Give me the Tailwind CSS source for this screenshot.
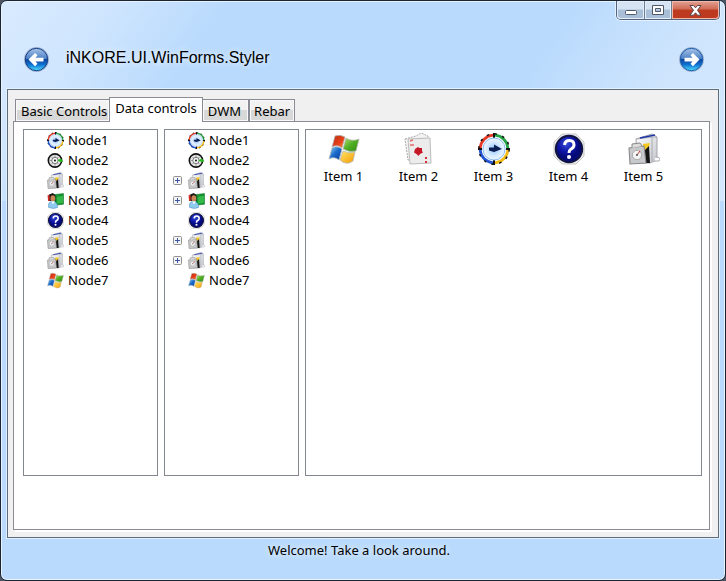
<!DOCTYPE html>
<html lang="en">
<head>
<meta charset="utf-8">
<title>iNKORE.UI.WinForms.Styler</title>
<script src="https://cdn.jsdelivr.net/npm/@tailwindcss/browser@4"></script>
</head>
<body class="bg-[#4b5563] font-['Noto_Sans','Open_Sans',sans-serif] text-[13px] leading-5 text-black">
<svg class="absolute size-0" aria-hidden="true">
  <defs>
    <linearGradient id="orb" x1="0" y1="0" x2="0" y2="1">
      <stop offset="0" stop-color="#a9c3e6"/><stop offset=".47" stop-color="#4a7fc6"/><stop offset=".5" stop-color="#0c439f"/><stop offset=".72" stop-color="#0d6fd0"/><stop offset="1" stop-color="#4fe0ff"/>
    </linearGradient>
    <linearGradient id="red" x1="0" y1="0" x2="1" y2="1"><stop offset="0" stop-color="#b92a0c"/><stop offset=".6" stop-color="#e8431b"/><stop offset="1" stop-color="#ff9a4a"/></linearGradient>
    <linearGradient id="green" x1="0" y1="0" x2="1" y2="1"><stop offset="0" stop-color="#b5e07a"/><stop offset=".5" stop-color="#4fae22"/><stop offset="1" stop-color="#2f8a12"/></linearGradient>
    <linearGradient id="blue" x1="0" y1="0" x2="1" y2="1"><stop offset="0" stop-color="#8fd6f5"/><stop offset=".5" stop-color="#1767c9"/><stop offset="1" stop-color="#0c3d9a"/></linearGradient>
    <linearGradient id="gold" x1="0" y1="0" x2="1" y2="1"><stop offset="0" stop-color="#ffe66a"/><stop offset="1" stop-color="#f59a00"/></linearGradient>
    <radialGradient id="dial"><stop offset="0" stop-color="#8fc4ff"/><stop offset=".5" stop-color="#d5eaff"/><stop offset="1" stop-color="#ffffff"/></radialGradient>
    <radialGradient id="ball" cx=".4" cy=".3"><stop offset="0" stop-color="#3b50d8"/><stop offset=".6" stop-color="#0f16a8"/><stop offset="1" stop-color="#050a78"/></radialGradient>
    <linearGradient id="box" x1="0" y1="0" x2="1" y2="1"><stop offset="0" stop-color="#fff"/><stop offset="1" stop-color="#c4c6cc"/></linearGradient>
  </defs>
  <symbol id="flag" viewBox="0 0 32 32">
    <path d="M7 3Q12 1 17 4L14 15Q9 11 4 14Z" fill="url(#red)" stroke="#b8b8b8" stroke-width=".8"/>
    <path d="M18 5Q24 9 31 6L28 18Q22 20 15 16Z" fill="url(#green)" stroke="#b8b8b8" stroke-width=".8"/>
    <path d="M4 15Q9 12 14 16L11 27Q6 23 1 26Z" fill="url(#blue)" stroke="#b8b8b8" stroke-width=".8"/>
    <path d="M15 18Q21 21 27 19L25 28Q18 33 12 27Z" fill="url(#gold)" stroke="#b8b8b8" stroke-width=".8"/>
  </symbol>
  <symbol id="clock" viewBox="0 0 32 32">
    <circle cx="16" cy="16" r="13.5" fill="url(#dial)"/>
    <g fill="none" stroke-width="2.8">
      <path d="M2.2 15A13.8 13.8 0 0 1 15 2.2" stroke="#e53925"/>
      <path d="M17 2.2A13.8 13.8 0 0 1 29.8 15" stroke="#27a344"/>
      <path d="M29.8 17A13.8 13.8 0 0 1 17 29.8" stroke="#f4bb15"/>
      <path d="M15 29.8A13.8 13.8 0 0 1 2.2 17" stroke="#2455d4"/>
    </g>
    <circle cx="16" cy="16" r="15.2" fill="none" stroke="#111" stroke-width="1.4" stroke-dasharray="2.6 5.36"/>
    <path d="M16 0V5M16 27V32M0 16H4M28 16H32" stroke="#111" stroke-width="2"/>
    <circle cx="16" cy="16" r="11" fill="none" stroke="#8dbcf0" stroke-width="1"/>
    <path d="M11 14.5L16 14.5L16 11.5L24 16L16 19L11 17.5Z" fill="#0a1f52"/>
  </symbol>
  <symbol id="gauge" viewBox="0 0 32 32">
    <circle cx="15" cy="16" r="12.5" fill="#e6e6e6" stroke="#111" stroke-width="3"/>
    <path d="M15 6V26M5 16H25M8 9L22 23M22 9L8 23" stroke="#777" stroke-width="1.3"/>
    <circle cx="15" cy="16" r="6" fill="#f2f2f2" stroke="#555" stroke-width="1.4"/>
    <circle cx="15" cy="16" r="2" fill="#222"/>
    <path d="M19 16L26 12L31 18L26 19Z" fill="#25bb1d"/>
  </symbol>
  <symbol id="package" viewBox="0 0 32 32">
    <path d="M8 6L24 1L29 4V27L22 30H9Z" fill="url(#box)" stroke="#a5a7b0"/>
    <path d="M8 6L24 4V28M24 4L29 4" fill="none" stroke="#a9abb4"/>
    <path d="M12 5L27 2" stroke="#1c35a8" stroke-width="1.5"/>
    <path d="M15 11L22 10L20 17L15 16Z" fill="#f6c91c"/>
    <path d="M17 17L21 13L22 30H16Z" fill="#151515"/>
    <path d="M1 15L16 13L18 30L2 31Z" fill="#c9cacd" stroke="#888" stroke-width="1.1"/>
    <path d="M4 15V11L12 10L14 13" fill="#ddd" stroke="#888"/>
    <circle cx="9" cy="22" r="4.7" fill="#f3f3f3" stroke="#aaa"/><path d="M9 22L12 18" stroke="#c33"/>
    <circle cx="9" cy="22" r="1" fill="#555"/>
    <path d="M27 24Q34 24 31 28H27" fill="#fff" stroke="#aaa"/>
  </symbol>
  <symbol id="user" viewBox="0 0 32 32">
    <path d="M13 5L31 3V23L15 25Z" fill="#159431" stroke="#087020"/>
    <path d="M19 9L30 7V20L19 22Z" fill="#33b84a"/>
    <path d="M3 5L11 2L16 6V17H3Z" fill="#171717"/><path d="M1 6H5V17H2Z" fill="#d32b20"/>
    <ellipse cx="11" cy="12" rx="4.5" ry="6" fill="#c98657"/>
    <path d="M3 29Q1 18 10 18Q20 18 20 29Q12 33 3 29Z" fill="#8fcbee" stroke="#4b91c2"/>
    <path d="M8 18L11 23L15 18Z" fill="#fff"/>
  </symbol>
  <symbol id="help" viewBox="0 0 32 32">
    <path d="M9 1H23L31 9V23L23 31H9L1 23V9Z" fill="#eee" stroke="#c6c6c6"/>
    <circle cx="16" cy="16" r="13.2" fill="url(#ball)" stroke="#11153f" stroke-width="2"/>
    <path d="M11.5 12Q12 7.5 16.5 7.5T21 12Q21 14.5 17.5 16.5Q16 17.5 16 20" fill="none" stroke="#fff" stroke-width="3"/>
    <circle cx="16" cy="24" r="2" fill="#fff"/>
  </symbol>
  <symbol id="cards" viewBox="0 0 32 32">
    <path d="M2 6L13 3L18 0L25 3L24 29L5 27Z" fill="#f3f3f3" stroke="#aaa" stroke-dasharray="2 1"/>
    <path d="M5 6L27 5L28 30L7 31Z" fill="#ececed" stroke="#bbb"/>
    <path d="M7 8L10 7M7 12L11 12" stroke="#e46b6b" stroke-width="1.5"/>
    <path d="M15 14L16.500 15L19 15V18L20 19.500L17 21L15.500 23L13.500 21L11 19.500L12 16Z" fill="#c51826"/>
    <path d="M22 25H24M22 29H24" stroke="#d8303a" stroke-width="2"/>
  </symbol>
</svg>

<div class="flex min-h-screen flex-col overflow-hidden rounded-[7px] border border-[#1b2532] bg-[#b9dafd] bg-[linear-gradient(125deg,#d8eafe_0%,#d0e6fe_12%,#b9dafd_27%,#b9dafd_66%,#cfe5fd_84%,#d3e8fe_100%)] bg-[length:100%_200px] bg-no-repeat px-[5px] shadow-[inset_0_0_0_1px_#e7f4ff]">
  <header class="flex h-[87px] flex-col">
    <div class="flex h-[19px] shrink-0 justify-end">
      <div class="flex rounded-b-[5px] border border-t-0 border-[#52647b] shadow-[0_0_0_1px_#e2f0ff]">
        <button aria-label="Minimize" class="flex w-7 items-center justify-center rounded-bl-[4px] border-r border-[#6d7d92] bg-linear-to-b from-[#d6e3f3] from-45% to-[#a9bed7] to-50% shadow-[inset_0_0_0_1px_#e4eefa]">
          <svg class="mt-1 h-[5px] w-3" viewBox="0 0 12 5"><rect x=".5" y=".5" width="11" height="4" rx="1" fill="#fff" stroke="#50596a"/></svg>
        </button>
        <button aria-label="Maximize" class="flex w-[27px] items-center justify-center border-r border-[#6d7d92] bg-linear-to-b from-[#d6e3f3] from-45% to-[#a9bed7] to-50% shadow-[inset_0_0_0_1px_#e4eefa]">
          <svg class="h-[10px] w-3" viewBox="0 0 12 10"><path d="M.5.5H11.5V9.5H.5ZM3.5 3.5V6.5H8.5V3.5Z" fill="#fff" fill-rule="evenodd" stroke="#50596a"/></svg>
        </button>
        <button aria-label="Close" class="flex w-[47px] items-center justify-center rounded-br-[4px] bg-linear-to-b from-[#e2a293] from-0% via-[#cf6a55] via-45% to-[#bd3a21] to-50% shadow-[inset_0_0_0_1px_#f0b7aa]">
          <svg class="h-[11px] w-[13px]" viewBox="0 0 13 11"><path d="M1 .5H4.5L6.5 2.8L8.5.5H12L8.5 5.3L12 10.2H8.5L6.5 7.8L4.5 10.2H1L4.5 5.3Z" fill="#fff" stroke="#5c4147"/></svg>
        </button>
      </div>
    </div>
    <div class="flex grow items-center gap-4 pt-[10px] pr-[15px] pl-[17px]">
      <button aria-label="Back" class="size-[27px]">
        <svg viewBox="0 0 27 27"><circle cx="13.5" cy="13.5" r="12.5" fill="#9eb4d2"/><circle cx="13.5" cy="13.5" r="11.2" fill="url(#orb)" stroke="#153f87"/><path d="M5.5 13.5L12 7L14.5 9.3L12.5 11.8H20.5V15.4H12.5L14.5 17.8L12 20.2Z" fill="#fff"/></svg>
      </button>
      <h1 class="grow pb-[2px] font-['Liberation_Sans',Arial,sans-serif] text-base leading-5 text-shadow-[0_0_6px_white]">iNKORE.UI.WinForms.Styler</h1>
      <button aria-label="Forward" class="size-[27px]">
        <svg viewBox="0 0 27 27"><circle cx="13.5" cy="13.5" r="12.5" fill="#9eb4d2"/><circle cx="13.5" cy="13.5" r="11.2" fill="url(#orb)" stroke="#1b5fae"/><path d="M21.5 13.5L15 7L12.5 9.3L14.5 11.8H6.5V15.4H14.5L12.5 17.8L15 20.2Z" fill="#fff"/></svg>
      </button>
    </div>
  </header>

  <main class="flex grow flex-col border border-[#e1f0ff]">
    <div class="flex grow flex-col border border-[#5e6c7e] bg-[#f0f0f0] px-[5px] pt-[7px] pb-[7px]">
      <div role="tablist" class="z-10 -mb-px flex items-end pl-[2px]">
        <button role="tab" id="tab-basic" class="h-[23px] border border-r-0 border-[#898c95] bg-linear-to-b from-[#f2f2f2] from-45% to-[#d8d8d8] to-50% pr-[2px] pl-[5px] shadow-[inset_0_0_0_1px_#f9f9f9]">Basic Controls</button>
        <button role="tab" id="tab-data" aria-selected="true" aria-controls="data-panel" class="h-[25px] border border-b-0 border-[#898c95] bg-white px-[5px] pb-1">Data controls</button>
        <button role="tab" id="tab-dwm" class="h-[23px] border border-l-0 border-[#898c95] bg-linear-to-b from-[#f2f2f2] from-45% to-[#d8d8d8] to-50% pr-[7px] pl-[5px] shadow-[inset_0_0_0_1px_#f9f9f9]">DWM</button>
        <button role="tab" id="tab-rebar" class="h-[23px] border border-[#898c95] bg-linear-to-b from-[#f2f2f2] from-45% to-[#d8d8d8] to-50% px-1 shadow-[inset_0_0_0_1px_#f9f9f9]">Rebar</button>
      </div>
      <div id="data-panel" role="tabpanel" aria-labelledby="tab-data" class="mr-[3px] flex grow gap-[6px] border border-[#898c95] bg-white pt-[7px] pr-[7px] pb-[53px] pl-[9px] shadow-[2px_2px_0_0_white]">
        <ul aria-label="Nodes" class="w-[135px] shrink-0 border border-[#828790] pl-[23px]">
          <li class="flex h-5 items-center gap-1"><svg class="size-[17px]"><use href="#clock"/></svg>Node1</li>
          <li class="flex h-5 items-center gap-1"><svg class="size-[17px]"><use href="#gauge"/></svg>Node2</li>
          <li class="flex h-5 items-center gap-1"><svg class="size-[17px]"><use href="#package"/></svg>Node2</li>
          <li class="flex h-5 items-center gap-1"><svg class="size-[17px]"><use href="#user"/></svg>Node3</li>
          <li class="flex h-5 items-center gap-1"><svg class="size-[17px]"><use href="#help"/></svg>Node4</li>
          <li class="flex h-5 items-center gap-1"><svg class="size-[17px]"><use href="#package"/></svg>Node5</li>
          <li class="flex h-5 items-center gap-1"><svg class="size-[17px]"><use href="#package"/></svg>Node6</li>
          <li class="flex h-5 items-center gap-1"><svg class="size-[17px]"><use href="#flag"/></svg>Node7</li>
        </ul>
        <ul aria-label="Expandable nodes" class="w-[135px] shrink-0 border border-[#828790] pl-2">
          <li class="flex h-5 items-center gap-1 pl-[15px]"><svg class="size-[17px]"><use href="#clock"/></svg>Node1</li>
          <li class="flex h-5 items-center gap-1 pl-[15px]"><svg class="size-[17px]"><use href="#gauge"/></svg>Node2</li>
          <li class="flex h-5 items-center gap-1"><button aria-label="Expand Node2" class="mr-[2px] size-[9px]"><svg viewBox="0 0 9 9"><rect x=".5" y=".5" width="8" height="8" rx="1" fill="#f4f4f4" stroke="#919191"/><path d="M2 4.5H7M4.5 2V7" stroke="#3a56a5"/></svg></button><svg class="size-[17px]"><use href="#package"/></svg>Node2</li>
          <li class="flex h-5 items-center gap-1"><button aria-label="Expand Node3" class="mr-[2px] size-[9px]"><svg viewBox="0 0 9 9"><rect x=".5" y=".5" width="8" height="8" rx="1" fill="#f4f4f4" stroke="#919191"/><path d="M2 4.5H7M4.5 2V7" stroke="#3a56a5"/></svg></button><svg class="size-[17px]"><use href="#user"/></svg>Node3</li>
          <li class="flex h-5 items-center gap-1 pl-[15px]"><svg class="size-[17px]"><use href="#help"/></svg>Node4</li>
          <li class="flex h-5 items-center gap-1"><button aria-label="Expand Node5" class="mr-[2px] size-[9px]"><svg viewBox="0 0 9 9"><rect x=".5" y=".5" width="8" height="8" rx="1" fill="#f4f4f4" stroke="#919191"/><path d="M2 4.5H7M4.5 2V7" stroke="#3a56a5"/></svg></button><svg class="size-[17px]"><use href="#package"/></svg>Node5</li>
          <li class="flex h-5 items-center gap-1"><button aria-label="Expand Node6" class="mr-[2px] size-[9px]"><svg viewBox="0 0 9 9"><rect x=".5" y=".5" width="8" height="8" rx="1" fill="#f4f4f4" stroke="#919191"/><path d="M2 4.5H7M4.5 2V7" stroke="#3a56a5"/></svg></button><svg class="size-[17px]"><use href="#package"/></svg>Node6</li>
          <li class="flex h-5 items-center gap-1 pl-[15px]"><svg class="size-[17px]"><use href="#flag"/></svg>Node7</li>
        </ul>
        <ul aria-label="Items" class="flex grow flex-wrap content-start border border-[#828790] pt-[3px]">
          <li class="flex w-[75px] flex-col items-center gap-px"><svg class="size-8"><use href="#flag"/></svg>Item 1</li>
          <li class="flex w-[75px] flex-col items-center gap-px"><svg class="size-8"><use href="#cards"/></svg>Item 2</li>
          <li class="flex w-[75px] flex-col items-center gap-px"><svg class="size-8"><use href="#clock"/></svg>Item 3</li>
          <li class="flex w-[75px] flex-col items-center gap-px"><svg class="size-8"><use href="#help"/></svg>Item 4</li>
          <li class="flex w-[75px] flex-col items-center gap-px"><svg class="size-8"><use href="#package"/></svg>Item 5</li>
        </ul>
      </div>
    </div>
  </main>
  <footer class="h-[41px] pt-px pr-2 text-center text-shadow-[0_0_6px_white]">Welcome! Take a look around.</footer>
</div>
</body>
</html>
